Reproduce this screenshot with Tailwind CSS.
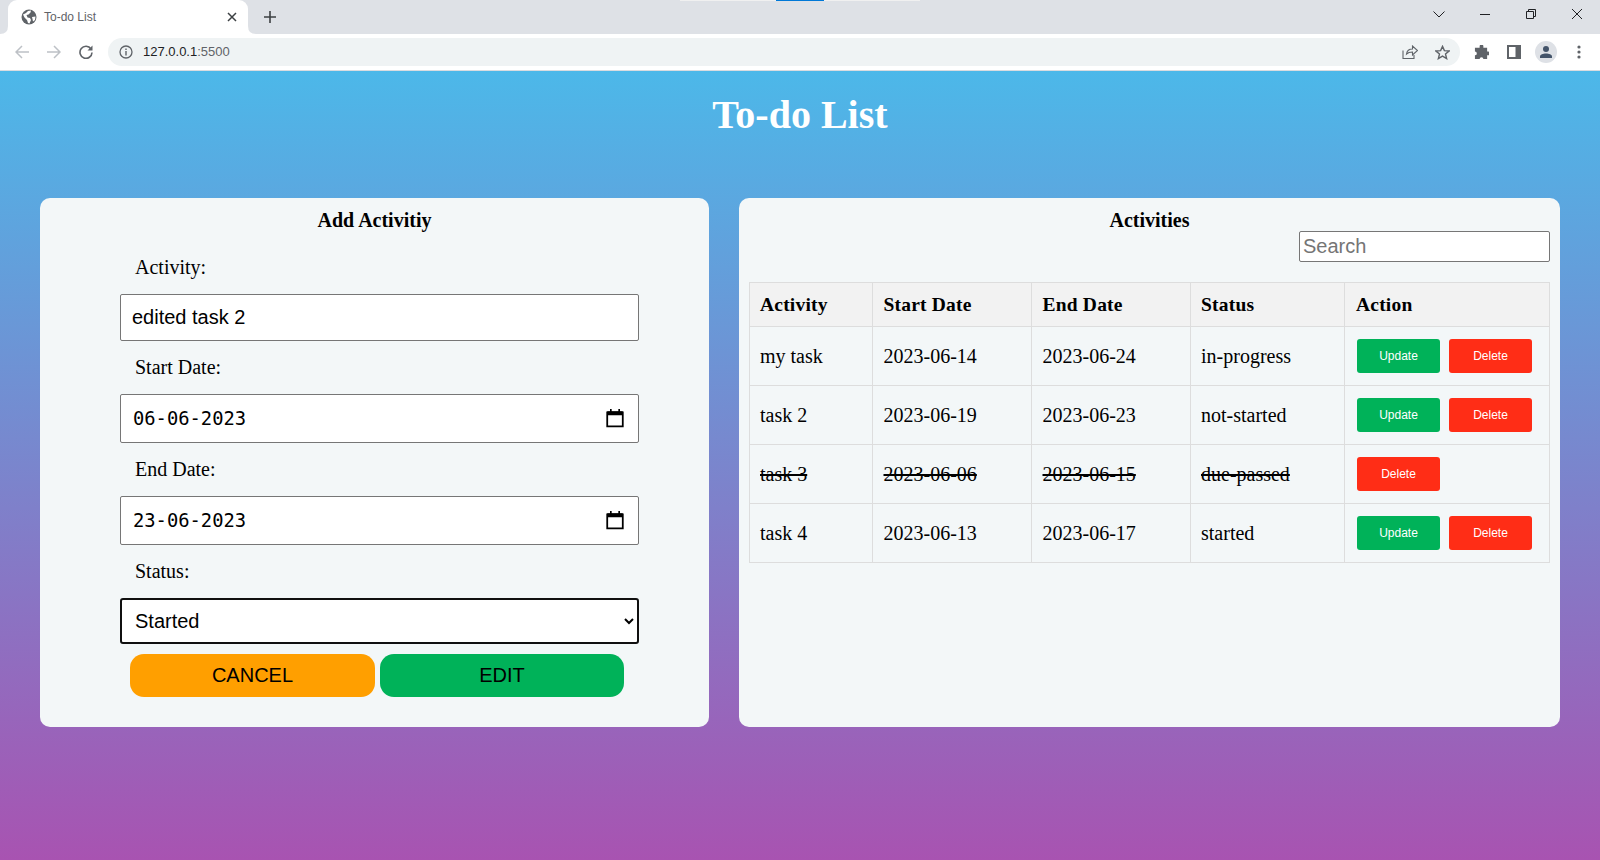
<!DOCTYPE html>
<html lang="en">
<head>
  <meta charset="UTF-8" />
  <title>To-do List</title>
  <script src="https://cdn.jsdelivr.net/npm/@tailwindcss/browser@4"></script>
</head>
<body class="h-[860px] w-[1600px] overflow-hidden flex flex-col font-['Liberation_Serif',serif] text-black">

  <!-- browser tab strip -->
  <div class="h-[34px] bg-[#dee1e6] flex items-end relative shrink-0 font-['Liberation_Sans',sans-serif]">
    <div class="absolute left-[680px] top-0 w-[240px] h-[1px] bg-[#f0f0f0]"></div>
    <div class="absolute left-[776px] top-0 w-[48px] h-[1px] bg-[#0078d7]"></div>
    <svg class="absolute left-0 bottom-0 w-[8px] h-[8px]" viewBox="0 0 8 8"><path d="M0 8 Q8 8 8 0 V8Z" fill="#fff"/></svg>
    <svg class="absolute left-[248px] bottom-0 w-[8px] h-[8px]" viewBox="0 0 8 8"><path d="M8 8 Q0 8 0 0 V8Z" fill="#fff"/></svg>
    <div class="ml-[8px] w-[240px] h-[34px] bg-white rounded-t-[9px] flex items-center pl-[13px] pr-[11px]">
      <svg class="w-[16px] h-[16px]" viewBox="0 0 16 16"><circle cx="8" cy="8" r="7.5" fill="#5f6368"/><path d="M2 5.5 L5 4 L7 2 L10 1.5 L9.5 3.5 L7.5 5.5 L5.5 6 L6.5 8.5 L9 9 L10 11 L8.5 14.5 L7 14 L6 11 L3.5 8.5Z M11 8 L14.5 7.5 L14 11 L12 12.5 L11.5 10Z" fill="#fff"/></svg>
      <span class="ml-[7px] text-[12px] text-[#5f6368]">To-do List</span>
      <svg class="ml-auto w-[10px] h-[10px]" viewBox="0 0 10 10"><path d="M1 1 L9 9 M9 1 L1 9" stroke="#3c4043" stroke-width="1.5"/></svg>
    </div>
    <svg class="ml-[16px] mb-[11px] w-[12px] h-[12px]" viewBox="0 0 12 12"><path d="M6 0 V12 M0 6 H12" stroke="#3c4043" stroke-width="1.6"/></svg>
    <div class="ml-auto flex items-center h-[34px] pb-[6px]">
      <svg class="w-[12px] h-[7px]" viewBox="0 0 12 7"><path d="M.5 .5 L6 6 L11.5 .5" fill="none" stroke="#202124" stroke-width="1"/></svg>
      <svg class="ml-[35px] w-[10px] h-[1px]" viewBox="0 0 10 1"><path d="M0 .5 H10" stroke="#202124"/></svg>
      <svg class="ml-[36px] w-[10px] h-[10px]" viewBox="0 0 10 10"><path d="M.5 2.5 H7.5 V9.5 H.5Z M2.5 2.5 V.5 H9.5 V7.5 H7.5" fill="none" stroke="#202124"/></svg>
      <svg class="ml-[36px] mr-[18px] w-[10px] h-[10px]" viewBox="0 0 10 10"><path d="M0 0 L10 10 M10 0 L0 10" stroke="#202124"/></svg>
    </div>
  </div>

  <!-- browser toolbar -->
  <div class="h-[37px] bg-white border-b border-[#dadce0] flex items-center shrink-0 font-['Liberation_Sans',sans-serif]">
    <svg class="ml-[15px] w-[14px] h-[14px]" viewBox="0 0 14 14"><path d="M14 7 H1.5 M7 1 L1 7 L7 13" fill="none" stroke="#bdc1c6" stroke-width="1.5"/></svg>
    <svg class="ml-[18px] w-[14px] h-[14px]" viewBox="0 0 14 14"><path d="M0 7 H12.5 M7 1 L13 7 L7 13" fill="none" stroke="#bdc1c6" stroke-width="1.5"/></svg>
    <svg class="ml-[18px] w-[14px] h-[14px]" viewBox="0 0 14 14"><path d="M12 4 A6 6 0 1 0 13 7.5" fill="none" stroke="#5f6368" stroke-width="1.6"/><path d="M13.5 .5 V5.5 H8.5Z" fill="#5f6368"/></svg>
    <div class="ml-[15px] w-[1352px] h-[28px] rounded-full bg-[#eff3f4] flex items-center pl-[11px] pr-[10px]">
      <svg class="w-[14px] h-[14px]" viewBox="0 0 14 14"><circle cx="7" cy="7" r="6" fill="none" stroke="#5f6368" stroke-width="1.3"/><path d="M7 6 V10.5 M7 3.5 V5" stroke="#5f6368" stroke-width="1.4"/></svg>
      <span class="ml-[10px] text-[13px] text-[#202124]">127.0.0.1<span class="text-[#5f6368]">:5500</span></span>
      <svg class="ml-auto w-[16px] h-[14px]" viewBox="0 0 16 14"><path d="M1 5.5 V13.5 H12 V10 M4.5 9 C5 5.5 8 4 10.5 4 V1 L15.5 5.5 L10.5 10 V7 C8 7 6 7.5 4.5 9Z" fill="none" stroke="#5f6368" stroke-width="1.1"/></svg>
      <svg class="ml-[17px] w-[15px] h-[15px]" viewBox="0 0 16 16"><path d="M8 1.5 L10 6 L15 6.4 L11.2 9.6 L12.4 14.5 L8 11.9 L3.6 14.5 L4.8 9.6 L1 6.4 L6 6Z" fill="none" stroke="#5f6368" stroke-width="1.5"/></svg>
    </div>
    <svg class="ml-[14px] w-[15px] h-[15px]" viewBox="0 0 16 16"><path d="M6 1.5 A2 2 0 0 1 10 1.5 V3 H14 V7 H15 A2 2 0 0 1 15 11 H14 V15 H10 A2 2 0 0 0 6 15 H1 V11 A2 2 0 0 0 1 7 V3 H6Z" fill="#5f6368"/></svg>
    <svg class="ml-[18px] w-[14px] h-[14px]" viewBox="0 0 14 14"><path d="M0 0 H14 V14 H0Z M2 2 V12 H8.5 V2Z" fill="#5f6368" fill-rule="evenodd"/></svg>
    <div class="ml-[14px] w-[22px] h-[22px] rounded-full bg-[#dee1e6] flex items-center justify-center">
      <svg class="w-[14px] h-[14px]" viewBox="0 0 14 14"><circle cx="7" cy="4" r="3" fill="#44546a"/><path d="M1 13 V11.5 C1 9.5 4 8.5 7 8.5 C10 8.5 13 9.5 13 11.5 V13Z" fill="#44546a"/></svg>
    </div>
    <svg class="ml-[20px] w-[4px] h-[14px]" viewBox="0 0 4 14"><circle cx="2" cy="2" r="1.6" fill="#5f6368"/><circle cx="2" cy="7" r="1.6" fill="#5f6368"/><circle cx="2" cy="12" r="1.6" fill="#5f6368"/></svg>
  </div>

  <!-- page -->
  <div class="flex-1 bg-linear-to-b/srgb from-[#4cb8e9] to-[#a853b1] px-[40px]">
    <h1 class="text-[40px] font-bold text-white text-center leading-[46px] pt-[21px]">To-do List</h1>

    <div class="flex gap-[30px] mt-[60px]">
      <!-- add form -->
      <div class="w-[669px] h-[529px] bg-[#f3f7f8] rounded-[10px] pl-[80px]">
        <h2 class="w-[509px] text-center text-[20px] font-bold leading-[22px] pt-[11px]">Add Activitiy</h2>
        <label class="block pl-[15px] text-[20px] leading-[23px] mt-[25px]">Activity:</label>
        <input type="text" value="edited task 2" class="block mt-[15px] w-[519px] h-[47px] bg-white border border-[#767676] rounded-[2px] px-[11px] text-[20px] font-['Liberation_Sans',sans-serif]" />
        <label class="block pl-[15px] text-[20px] leading-[23px] mt-[15px]">Start Date:</label>
        <div class="mt-[15px] w-[519px] h-[49px] bg-white border border-[#767676] rounded-[2px] pl-[12px] pr-[14px] flex items-center justify-between">
          <span class="pt-[1px] font-['DejaVu_Sans_Mono',monospace] text-[18.8px]">06-06-2023</span>
          <svg class="w-[18px] h-[20px] mb-[2px]" viewBox="0 0 16 18"><path d="M1 4 H15 V16.5 H1Z" fill="none" stroke="#000" stroke-width="1.6"/><path d="M1 3 H15 V6.5 H1Z M3.5 1 H5 V3 H3.5Z M11 1 H12.5 V3 H11Z" fill="#000"/></svg>
        </div>
        <label class="block pl-[15px] text-[20px] leading-[23px] mt-[15px]">End Date:</label>
        <div class="mt-[15px] w-[519px] h-[49px] bg-white border border-[#767676] rounded-[2px] pl-[12px] pr-[14px] flex items-center justify-between">
          <span class="pt-[1px] font-['DejaVu_Sans_Mono',monospace] text-[18.8px]">23-06-2023</span>
          <svg class="w-[18px] h-[20px] mb-[2px]" viewBox="0 0 16 18"><path d="M1 4 H15 V16.5 H1Z" fill="none" stroke="#000" stroke-width="1.6"/><path d="M1 3 H15 V6.5 H1Z M3.5 1 H5 V3 H3.5Z M11 1 H12.5 V3 H11Z" fill="#000"/></svg>
        </div>
        <label class="block pl-[15px] text-[20px] leading-[23px] mt-[15px]">Status:</label>
        <select class="block mt-[15px] w-[519px] h-[46px] bg-white border-2 border-[#101010] rounded-[3px] pl-[9px] text-[20px] font-['Liberation_Sans',sans-serif] appearance-auto">
          <option>Started</option>
        </select>
        <div class="flex gap-[5px] mt-[10px] ml-[10px]">
          <button class="w-[245px] h-[43px] pb-[2px] bg-[#ff9f00] rounded-[14px] text-[20px] font-['Liberation_Sans',sans-serif]">CANCEL</button>
          <button class="w-[244px] h-[43px] pb-[2px] bg-[#00b259] rounded-[14px] text-[20px] font-['Liberation_Sans',sans-serif]">EDIT</button>
        </div>
      </div>

      <!-- activities table -->
      <div class="w-[821px] h-[529px] bg-[#f3f7f8] rounded-[10px] px-[10px]">
        <h2 class="text-center text-[20px] font-bold leading-[22px] pt-[11px]">Activities</h2>
        <div class="flex justify-end">
          <input type="text" placeholder="Search" class="w-[251px] h-[31px] bg-white border border-[#767676] rounded-[2px] px-[3px] text-[20px] font-['Liberation_Sans',sans-serif] placeholder:text-[#757575]" />
        </div>
        <table class="mt-[20px] w-[800px] table-fixed border-collapse text-[20px]">
          <colgroup>
            <col class="w-[123px]" /><col class="w-[159px]" /><col class="w-[159px]" /><col class="w-[154px]" /><col class="w-[205px]" />
          </colgroup>
          <thead>
            <tr class="h-[44px] bg-[#f2f2f2] tracking-[0.2px]">
              <th class="border border-[#dddddd] text-left pl-[10px] font-bold text-[19.5px]">Activity</th>
              <th class="border border-[#dddddd] text-left pl-[10.5px] font-bold text-[19.5px]">Start Date</th>
              <th class="border border-[#dddddd] text-left pl-[10.5px] font-bold text-[19.5px]">End Date</th>
              <th class="border border-[#dddddd] text-left pl-[10px] font-bold text-[19.5px]">Status</th>
              <th class="border border-[#dddddd] text-left pl-[11px] font-bold text-[19.5px]">Action</th>
            </tr>
          </thead>
          <tbody>
            <tr class="h-[59px]">
              <td class="border border-[#dddddd] pl-[10px]">my task</td>
              <td class="border border-[#dddddd] pl-[10.5px]">2023-06-14</td>
              <td class="border border-[#dddddd] pl-[10.5px]">2023-06-24</td>
              <td class="border border-[#dddddd] pl-[10px]">in-progress</td>
              <td class="border border-[#dddddd] pl-[12px]">
                <div class="flex gap-[9px]">
                  <button class="w-[83px] h-[34px] bg-[#00b259] text-white text-[12px] rounded-[3px] font-['Liberation_Sans',sans-serif]">Update</button>
                  <button class="w-[83px] h-[34px] bg-[#ff2d16] text-white text-[12px] rounded-[3px] font-['Liberation_Sans',sans-serif]">Delete</button>
                </div>
              </td>
            </tr>
            <tr class="h-[59px]">
              <td class="border border-[#dddddd] pl-[10px]">task 2</td>
              <td class="border border-[#dddddd] pl-[10.5px]">2023-06-19</td>
              <td class="border border-[#dddddd] pl-[10.5px]">2023-06-23</td>
              <td class="border border-[#dddddd] pl-[10px]">not-started</td>
              <td class="border border-[#dddddd] pl-[12px]">
                <div class="flex gap-[9px]">
                  <button class="w-[83px] h-[34px] bg-[#00b259] text-white text-[12px] rounded-[3px] font-['Liberation_Sans',sans-serif]">Update</button>
                  <button class="w-[83px] h-[34px] bg-[#ff2d16] text-white text-[12px] rounded-[3px] font-['Liberation_Sans',sans-serif]">Delete</button>
                </div>
              </td>
            </tr>
            <tr class="h-[59px]">
              <td class="border border-[#dddddd] pl-[10px] line-through">task 3</td>
              <td class="border border-[#dddddd] pl-[10.5px] line-through">2023-06-06</td>
              <td class="border border-[#dddddd] pl-[10.5px] line-through">2023-06-15</td>
              <td class="border border-[#dddddd] pl-[10px] line-through">due-passed</td>
              <td class="border border-[#dddddd] pl-[12px]">
                <div class="flex gap-[9px]">
                  <button class="w-[83px] h-[34px] bg-[#ff2d16] text-white text-[12px] rounded-[3px] font-['Liberation_Sans',sans-serif]">Delete</button>
                </div>
              </td>
            </tr>
            <tr class="h-[59px]">
              <td class="border border-[#dddddd] pl-[10px]">task 4</td>
              <td class="border border-[#dddddd] pl-[10.5px]">2023-06-13</td>
              <td class="border border-[#dddddd] pl-[10.5px]">2023-06-17</td>
              <td class="border border-[#dddddd] pl-[10px]">started</td>
              <td class="border border-[#dddddd] pl-[12px]">
                <div class="flex gap-[9px]">
                  <button class="w-[83px] h-[34px] bg-[#00b259] text-white text-[12px] rounded-[3px] font-['Liberation_Sans',sans-serif]">Update</button>
                  <button class="w-[83px] h-[34px] bg-[#ff2d16] text-white text-[12px] rounded-[3px] font-['Liberation_Sans',sans-serif]">Delete</button>
                </div>
              </td>
            </tr>
          </tbody>
        </table>
      </div>
    </div>
  </div>

</body>
</html>
